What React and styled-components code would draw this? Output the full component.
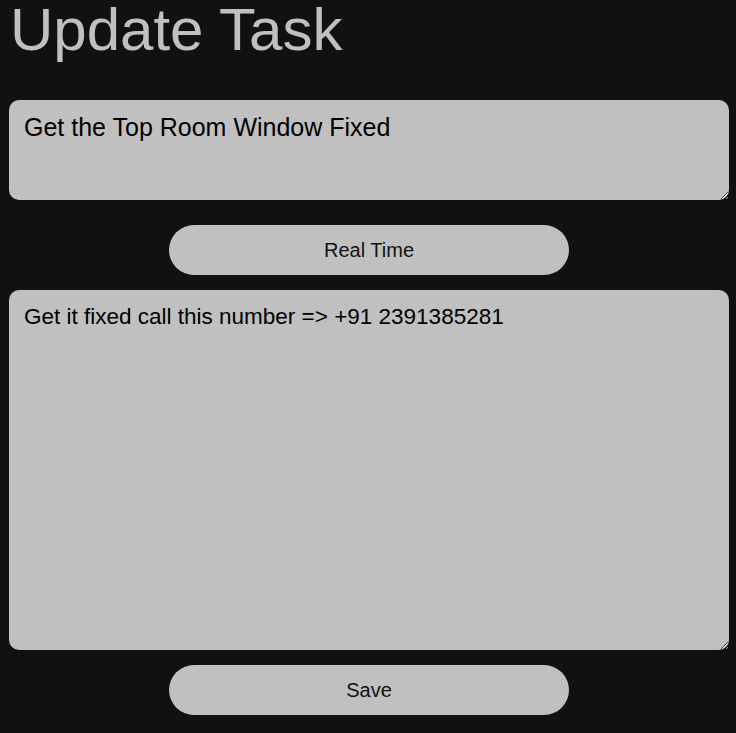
import React, { useState } from 'react';
import styled, { createGlobalStyle } from 'styled-components';

const GlobalStyle = createGlobalStyle`
  html, body {
    margin: 0;
    padding: 0;
    background: #111111;
    font-family: 'Liberation Sans', Arial, sans-serif;
  }
`;

const Page = styled.div`
  display: flex;
  flex-direction: column;
  align-items: center;
  padding: 0 7px 0 9px;
`;

const Title = styled.h1`
  align-self: flex-start;
  margin: 0 0 40px;
  padding-left: 1px;
  font-size: 60px;
  font-weight: 400;
  line-height: 60px;
  color: #c0c0c0;
`;

const Field = styled.textarea`
  display: block;
  width: 100%;
  height: ${({ tall }) => (tall ? '360px' : '100px')};
  box-sizing: border-box;
  padding: ${({ tall }) => (tall ? '14px 15px' : '13px 15px')};
  border: none;
  border-radius: 10px;
  background: #c0c0c0;
  color: #000;
  font-family: 'Liberation Sans', Arial, sans-serif;
  font-size: ${({ tall }) => (tall ? '22.5px' : '25px')};
  outline: none;
`;

const PillButton = styled.button`
  display: block;
  width: 400px;
  height: 50px;
  margin: ${({ spacing }) => spacing};
  border: none;
  border-radius: 25px;
  background: #c0c0c0;
  color: #111;
  font-family: 'Liberation Sans', Arial, sans-serif;
  font-size: 20px;
  cursor: pointer;
`;

const App = () => {
  const [title, setTitle] = useState('Get the Top Room Window Fixed');
  const [body, setBody] = useState('Get it fixed call this number => +91 2391385281');

  return (
    <>
      <GlobalStyle />
      <Page>
        <Title>Update Task</Title>
        <Field value={title} onChange={e => setTitle(e.target.value)} />
        <PillButton spacing="25px 0 15px">Real Time</PillButton>
        <Field tall value={body} onChange={e => setBody(e.target.value)} />
        <PillButton spacing="15px 0 18px">Save</PillButton>
      </Page>
    </>
  );
};

export default App;
